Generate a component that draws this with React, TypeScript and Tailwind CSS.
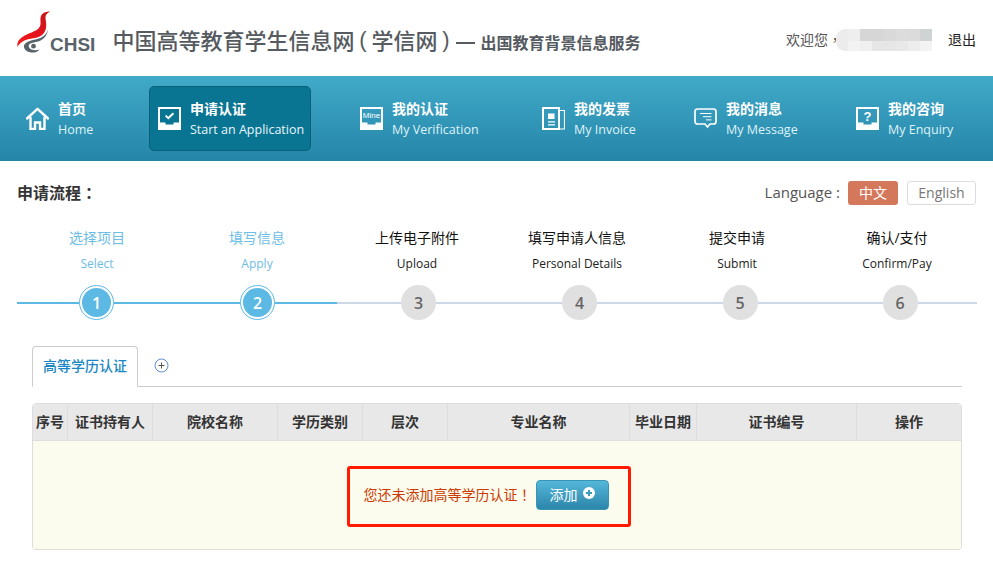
import React from "react";

const FONT = "font-['Open_Sans','Noto_Sans_CJK_SC',sans-serif]";
const TC = "font-['Noto_Sans_CJK_TC',sans-serif]";

function Logo() {
  return (
    <svg width="36" height="42" viewBox="0 0 36 42" className="block shrink-0">
      <defs>
        <linearGradient id="birdRed" x1="0.7" y1="0" x2="0.2" y2="1">
          <stop offset="0" stopColor="#c8161d" />
          <stop offset="0.6" stopColor="#e8141c" />
          <stop offset="1" stopColor="#f01c20" />
        </linearGradient>
      </defs>
      <path
        d="M33 0.5C28 0.5 24 2.5 23.5 7C23 11 25 14 21 18C17 21.5 7 23 2 29C0.5 31 0 33 0.5 36C3 31 8 28.5 15 27.5C23 26.5 27.5 24 29 17C30 11 27.5 7 29 4C30 2.5 31.5 1.5 33 0.5Z"
        fill="url(#birdRed)"
      />
      <path
        d="M31 18.5C29 25 24 27.5 17 28.8C11 30 6.5 32.5 7 36C7.5 39.5 11.5 41.8 16.5 41.5C19.5 41.3 21.5 40 22.5 38.5C20 39.5 17 39.6 14.5 38.6C12 37.5 11 35.5 12.2 33.6C13.5 32 16 31.5 19 31C25 30 30 26 31 18.5Z"
        fill="#59636a"
      />
      <circle cx="16.5" cy="35.2" r="2.4" fill="#59636a" />
    </svg>
  );
}

function IconHome() {
  return (
    <svg width="23" height="23" viewBox="0 0 23 23" fill="none" stroke="#fff" strokeWidth="2.4">
      <path d="M1 11.5 11.5 1.8 22 11.5" strokeLinecap="round" strokeLinejoin="round" />
      <path d="M4.5 10V22H9V15.5H14V22H18.5V10" />
    </svg>
  );
}

function Tray({ children }: { children?: React.ReactNode }) {
  return (
    <svg width="23" height="23" viewBox="0 0 23 23">
      <path fillRule="evenodd" fill="#fff" d="M0 0H23V23H0Z M2 2V15.5H7.5V17.5H15.5V15.5H21V2Z" />
      {children}
    </svg>
  );
}

function IconInvoice() {
  return (
    <svg width="23" height="23" viewBox="0 0 23 23" fill="none" stroke="#fff">
      <path d="M1 1H17V22H1Z" strokeWidth="2" />
      <path d="M17 3.5H22.5V22H17" strokeWidth="1.2" />
      <path d="M6 6.5H12.5V12H6Z" fill="#fff" stroke="none" />
      <path d="M6 14.8H13M6 17.8H13" strokeWidth="1.2" />
    </svg>
  );
}

function IconMessage() {
  return (
    <svg width="23" height="23" viewBox="0 0 23 23" fill="none" stroke="#fff">
      <path
        d="M3.5 2H19.5C21 2 22 3 22 4.5V14.5C22 16 21 17 19.5 17H16L13.5 20L11 17H3.5C2 17 1 16 1 14.5V4.5C1 3 2 2 3.5 2Z"
        strokeWidth="1.7"
      />
      <path d="M6 6.5H17.5M9 9.7H17.5M12 12.9H17.5" strokeWidth="1" />
    </svg>
  );
}

const navItems = [
  { zh: "首页", en: "Home", cls: "ml-[17px] w-[132px]", icon: <IconHome /> },
  {
    zh: "申请认证",
    en: "Start an Application",
    active: true,
    cls: "w-[162px]",
    icon: (
      <Tray>
        <path d="M7.6 8.6 10.3 11.2 15.4 6.2" fill="none" stroke="#fff" strokeWidth="2" />
      </Tray>
    ),
  },
  {
    zh: "我的认证",
    en: "My Verification",
    cls: "ml-[40px] w-[182px]",
    icon: (
      <Tray>
        <text x="11.5" y="11" textAnchor="middle" fontSize="8" fill="#fff" fontFamily="Liberation Sans">
          Mine
        </text>
      </Tray>
    ),
  },
  { zh: "我的发票", en: "My Invoice", cls: "w-[152px]", icon: <IconInvoice /> },
  { zh: "我的消息", en: "My Message", cls: "w-[162px]", icon: <IconMessage /> },
  {
    zh: "我的咨询",
    en: "My Enquiry",
    cls: "w-[146px]",
    icon: (
      <Tray>
        <text x="11.5" y="14" textAnchor="middle" fontSize="13" fontWeight="700" fill="#fff" fontFamily="Liberation Sans">
          ?
        </text>
      </Tray>
    ),
  },
];

const steps = [
  { zh: "选择项目", en: "Select", done: true },
  { zh: "填写信息", en: "Apply", done: true },
  { zh: "上传电子附件", en: "Upload" },
  { zh: "填写申请人信息", en: "Personal Details" },
  { zh: "提交申请", en: "Submit" },
  { zh: "确认/支付", en: "Confirm/Pay" },
];

const columns = ["序号", "证书持有人", "院校名称", "学历类别", "层次", "专业名称", "毕业日期", "证书编号", "操作"];

const topMosaic = ["#ececec", "#eeeeee", "#d6d6d6", "#d6d6d6", "#d9d9d9", "#dcdcdc", "#dbdbdb", "#d0d3d3"];
const bottomMosaic = ["#ececec", "#f2f2f2", "#f0f0f0", "#e6e6e6", "#e6e6e6", "#e8e8e8", "#ededed", "#f3f3f3"];

export default function App() {
  return (
    <div className={`${FONT} w-[993px] h-[572px] overflow-hidden bg-white`}>
      <header className="h-[76px] flex items-start">
        <div className="ml-[17px] mt-[11px] flex items-end">
          <Logo />
          <span className="font-['Liberation_Sans',sans-serif] font-bold text-[19px] leading-[19px] text-[#59636a] -ml-[3px] mb-[-1px]">
            CHSI
          </span>
        </div>
        <div className="ml-[17px] mt-[24px] flex items-center h-[32px] text-[#555b60] whitespace-nowrap font-medium">
          <span className="text-[22px] leading-[32px]">中国高等教育学生信息网</span>
          <span className="text-[22px] leading-[32px] w-[17px] text-center font-['Liberation_Sans'] font-normal">(</span>
          <span className="text-[22px] leading-[32px]">学信网</span>
          <span className="text-[22px] leading-[32px] w-[17px] text-center font-['Liberation_Sans'] font-normal">)</span>
          <span className="w-[19px] h-[2px] bg-[#555b60] ml-[2px] mr-[5px] mt-[5px]" />
          <span className="text-[16px] font-bold leading-[32px] mt-[5px]">出国教育背景信息服务</span>
        </div>
        <div className="ml-auto mr-[17px] mt-[29px] flex items-center h-[22px] text-[14px] whitespace-nowrap">
          <span className="text-[#555] w-[50px] pb-[2px]">
            欢迎您<span className={TC}>，</span>
          </span>
          <div className="w-[96px] h-[22px] rounded-l-[9px] overflow-hidden flex flex-col">
            <div className="flex h-[12px]">
              {topMosaic.map((c, i) => (
                <div key={i} className="flex-1" style={{ background: c }} />
              ))}
            </div>
            <div className="flex h-[10px]">
              {bottomMosaic.map((c, i) => (
                <div key={i} className="flex-1" style={{ background: c }} />
              ))}
            </div>
          </div>
          <span className="ml-[16px] text-[#222] pb-[2px]">退出</span>
        </div>
      </header>

      <nav className="h-[85px] bg-gradient-to-b from-[#41aac9] to-[#2485a8] flex items-center">
        {navItems.map((n) => (
          <div
            key={n.zh}
            className={`${n.cls} h-[65px] flex items-center gap-[9px] shrink-0 text-white rounded-[5px] ${
              n.active ? "bg-[#097592] border border-[#0a6079] pl-[8px]" : "pl-[9px]"
            }`}
          >
            <div className="w-[23px] h-[23px] shrink-0">{n.icon}</div>
            <div className="whitespace-nowrap mt-[1px]">
              <div className="text-[14px] leading-[20px] font-bold">{n.zh}</div>
              <div className={`mt-[1px] text-[12.5px] leading-[20px] ${n.active ? "text-[#eaf6fa]" : "text-[#dff2f8]"}`}>{n.en}</div>
            </div>
          </div>
        ))}
      </nav>

      <div className="mt-[20px] mb-[20px] px-[17px] flex items-center h-[24px]">
        <span className="text-[16px] font-bold text-[#333] pb-[2px]">
          申请流程<span className={TC}>：</span>
        </span>
        <div className="ml-auto flex items-center text-[14px]">
          <span className="text-[#555] text-[15px] mr-[8px] pb-[2px]">Language :</span>
          <span className="w-[50px] h-[24px] pb-[2px] rounded-[3px] bg-[#d4785c] text-white flex items-center justify-center">中文</span>
          <span className="ml-[9px] w-[69px] h-[24px] pb-[2px] rounded-[3px] border border-[#ddd] text-[#777] flex items-center justify-center">
            English
          </span>
        </div>
      </div>

      <div className="ml-[17px] w-[960px] grid grid-cols-6">
        {steps.map((s) => (
          <div key={s.zh} className="flex flex-col items-center">
            <div className={`h-[26px] text-[14px] leading-[26px] ${s.done ? "text-[#6dbde5]" : "text-[#111]"}`}>{s.zh}</div>
            <div className={`h-[26px] text-[12px] leading-[26px] ${s.done ? "text-[#6dbde5]" : "text-[#222]"}`}>{s.en}</div>
          </div>
        ))}
      </div>

      <div className="mt-[8px] ml-[16px] w-[964px] grid grid-cols-[161px_161px_161px_161px_160px_160px]">
        {steps.map((s, i) => (
          <div key={s.zh} className="h-[35px] flex items-center">
            <div className="flex-1 min-w-0">
              <div
                className={`h-[2px] ${i === 0 ? "ml-[1px]" : ""} ${i === 2 ? "-ml-[1px]" : ""} ${
                  s.done ? "bg-[#5bb9e3]" : "bg-[#cdd7e5]"
                }`}
              />
            </div>
            {s.done ? (
              <div className="w-[35px] h-[35px] rounded-full border border-[#5bb9e3] p-[2px] bg-white shrink-0">
                <div className="w-full h-full rounded-full bg-[#5bb9e3] text-white text-[16px] font-semibold flex items-center justify-center">
                  {i + 1}
                </div>
              </div>
            ) : (
              <div className="w-[35px] h-[35px] rounded-full bg-[#e0e0e0] text-[#666] text-[16px] font-semibold flex items-center justify-center shrink-0">
                {i + 1}
              </div>
            )}
            <div className="flex-1 min-w-0">
              <div className={`h-[2px] ${i === 5 ? "mr-[3px]" : ""} ${i === 1 ? "mr-[1px]" : ""} ${s.done ? "bg-[#5bb9e3]" : "bg-[#cdd7e5]"}`} />
            </div>
          </div>
        ))}
      </div>

      <div className="ml-[32px] w-[930px] mt-[26px]">
        <div className="h-[41px] border-b border-[#ccc] flex items-start">
          <div className="w-[106px] h-[41px] pb-[2px] border border-[#ccc] border-b-white bg-white rounded-t-[4px] flex items-center justify-center text-[14px] font-medium text-[#1b87c4]">
            高等学历认证
          </div>
          <svg width="15" height="15" viewBox="0 0 15 15" fill="none" stroke="#5f8fd0" className="ml-[16px] mt-[12px]">
            <circle cx="7.5" cy="7.5" r="6.5" />
            <path d="M7.5 4.5V10.5M4.5 7.5H10.5" stroke="#555" />
          </svg>
        </div>

        <div className="mt-[16px] h-[147px] border border-[#ddd] rounded-[4px] overflow-hidden flex flex-col">
          <div className="h-[37px] shrink-0 bg-[#e8e8e8] border-b border-[#ddd] grid grid-cols-[35px_85px_125px_85px_85px_182px_67px_160px_1fr] text-[14px] font-bold text-[#333]">
            {columns.map((c, i) => (
              <div key={c} className={`flex items-center justify-center whitespace-nowrap pb-[2px] ${i < 8 ? "border-r border-[#ddd]" : ""}`}>
                {c}
              </div>
            ))}
          </div>
          <div className="flex-1 bg-[#fbfbee] flex items-center justify-center pr-[22px]">
            <div className="relative flex items-center h-[30px]">
              <span className="text-[14px] text-[#cc3a00] whitespace-nowrap mr-[4px] pb-[2px]">
                您还未添加高等学历认证<span className={TC}>！</span>
              </span>
              <button className="w-[73px] h-[30px] pb-[2px] rounded-[4px] border border-[#3a95b5] bg-gradient-to-b from-[#55b7da] to-[#2a86aa] text-white text-[14px] flex items-center justify-center gap-[5px]">
                添加
                <svg width="12" height="12" viewBox="0 0 12 12" className="-mt-[3px]">
                  <circle cx="6" cy="6" r="6" fill="#fff" />
                  <path d="M6 3V9M3 6H9" stroke="#3a9abd" strokeWidth="2" />
                </svg>
              </button>
              <div className="absolute -left-[17px] -right-[22px] -top-[14px] -bottom-[17px] border-[3px] border-[#ff1a00] rounded-[3px]" />
            </div>
          </div>
        </div>
      </div>
    </div>
  );
}
